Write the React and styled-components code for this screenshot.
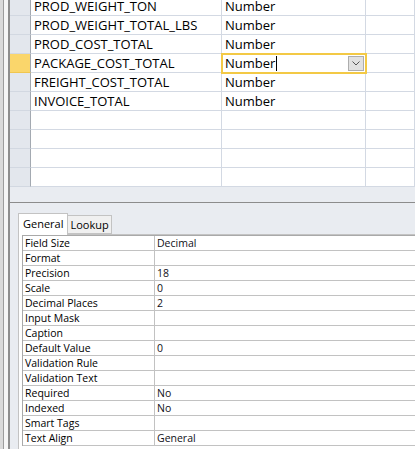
import React from 'react';
import styled, { createGlobalStyle } from 'styled-components';

const GlobalStyle = createGlobalStyle`
  html, body { margin: 0; padding: 0; background: #E9ECF1; }
  * { box-sizing: border-box; }
`;

const Frame = styled.div`
  display: flex;
  width: 415px;
  height: 449px;
  overflow: hidden;
  background: #E9ECF1;
  font-family: "Open Sans", "Noto Sans", sans-serif;
  color: #000;
`;

const WindowEdge = styled.div`
  flex: none;
  width: 10px;
  background: linear-gradient(to right, #DADADA 0 3px, #9C9C9C 3px 4px, #F6F6F6 4px 8px, #8E8E8E 8px 10px);
`;

const Main = styled.div`
  flex: 1;
  display: flex;
  flex-direction: column;
  min-width: 0;
`;

const DesignGrid = styled.div`
  flex: none;
  height: 203px;
  overflow: hidden;
  border-bottom: 1px solid #8C8C8C;
  background: #E9ECF1;
`;

const GridRows = styled.div`
  margin-top: -3px;
`;

const Row = styled.div`
  display: grid;
  grid-template-columns: 21px 191px 144px 1fr;
  height: 19px;
`;

const Selector = styled.div`
  background: ${({ active }) => (active ? '#FAD66B' : '#E3E7ED')};
  border-right: 1px solid #A3A9B1;
  border-bottom: 1px solid ${({ active }) => (active ? '#F0C64F' : '#D2D8E1')};
`;

const Cell = styled.div`
  position: relative;
  display: flex;
  align-items: center;
  padding: 0 1px 0 3px;
  background: #fff;
  border-right: 1px solid #D3D9E3;
  border-bottom: 1px solid #D3D9E3;
  font-size: 13px;
  line-height: 18px;
  white-space: nowrap;
  outline: ${({ editing }) => (editing ? '2px solid #F3C945' : 'none')};
  outline-offset: -1px;
  z-index: ${({ editing }) => (editing ? 1 : 0)};
`;

const Caret = styled.span`
  display: inline-block;
  width: 1px;
  height: 15px;
  margin-left: 1px;
  background: #000;
`;

const DropButton = styled.span`
  margin-left: auto;
  width: 16px;
  height: 15px;
  display: flex;
  align-items: center;
  justify-content: center;
  background: #E1E1E1;
  border: 1px solid #ADADAD;
`;

const BottomPanel = styled.div`
  flex: 1;
  padding: 9px 0 0 8px;
  background: #E9ECF1;
`;

const TabStrip = styled.div`
  display: flex;
  align-items: flex-end;
  height: 22px;
  position: relative;
  z-index: 1;
`;

const Tab = styled.div`
  height: ${({ active }) => (active ? '22px' : '19px')};
  padding: 0 ${({ active }) => (active ? '4px' : '2px')};
  margin-bottom: ${({ active }) => (active ? '-1px' : '0')};
  background: ${({ active }) => (active ? '#fff' : '#F0F0F0')};
  border: 1px solid #C3C3C3;
  border-bottom: ${({ active }) => (active ? 'none' : '1px solid #C3C3C3')};
  border-left: ${({ first }) => (first ? '1px solid #C3C3C3' : 'none')};
  font-size: 11px;
  line-height: ${({ active }) => (active ? '20px' : '18px')};
  color: #000;
`;

const TabPanel = styled.div`
  background: #fff;
  border-top: 1px solid #C3C3C3;
  border-left: 1px solid #C3C3C3;
  padding: 0 0 3px 3px;
`;

const PropTable = styled.div`
  border-top: 1px solid #A9A9A9;
  border-left: 1px solid #A9A9A9;
`;

const PropRow = styled.div`
  display: grid;
  grid-template-columns: 132px 1fr;
  height: 15px;
  border-bottom: 1px solid #C2C2C2;
`;

const PropLabel = styled.div`
  padding-left: 2px;
  border-right: 1px solid #C2C2C2;
  font-size: 10.5px;
  line-height: 14px;
  white-space: nowrap;
  color: #000;
`;

const PropValue = styled.div`
  padding-left: 2px;
  font-size: 10.5px;
  line-height: 14px;
  white-space: nowrap;
  color: #101018;
`;

const fields = [
  'PROD_WEIGHT_TON',
  'PROD_WEIGHT_TOTAL_LBS',
  'PROD_COST_TOTAL',
  'PACKAGE_COST_TOTAL',
  'FREIGHT_COST_TOTAL',
  'INVOICE_TOTAL',
  '',
  '',
  '',
  '',
];

const properties = [
  ['Field Size', 'Decimal'],
  ['Format', ''],
  ['Precision', '18'],
  ['Scale', '0'],
  ['Decimal Places', '2'],
  ['Input Mask', ''],
  ['Caption', ''],
  ['Default Value', '0'],
  ['Validation Rule', ''],
  ['Validation Text', ''],
  ['Required', 'No'],
  ['Indexed', 'No'],
  ['Smart Tags', ''],
  ['Text Align', 'General'],
];

const ACTIVE = 3;

export default function App() {
  return (
    <>
      <GlobalStyle />
      <Frame>
        <WindowEdge />
        <Main>
          <DesignGrid>
            <GridRows>
              {fields.map((name, i) => (
                <Row key={i}>
                  <Selector active={i === ACTIVE} />
                  <Cell>{name}</Cell>
                  <Cell editing={i === ACTIVE}>
                    {name ? 'Number' : ''}
                    {i === ACTIVE && (
                      <>
                        <Caret />
                        <DropButton>
                          <svg width="8" height="5" viewBox="0 0 8 5">
                            <path d="M0.5 0.5 L4 4 L7.5 0.5" fill="none" stroke="#555" strokeWidth="1" />
                          </svg>
                        </DropButton>
                      </>
                    )}
                  </Cell>
                  <Cell />
                </Row>
              ))}
            </GridRows>
          </DesignGrid>
          <BottomPanel>
            <TabStrip>
              <Tab active first>General</Tab>
              <Tab>Lookup</Tab>
            </TabStrip>
            <TabPanel>
              <PropTable>
                {properties.map(([label, value]) => (
                  <PropRow key={label}>
                    <PropLabel>{label}</PropLabel>
                    <PropValue>{value}</PropValue>
                  </PropRow>
                ))}
              </PropTable>
            </TabPanel>
          </BottomPanel>
        </Main>
      </Frame>
    </>
  );
}
